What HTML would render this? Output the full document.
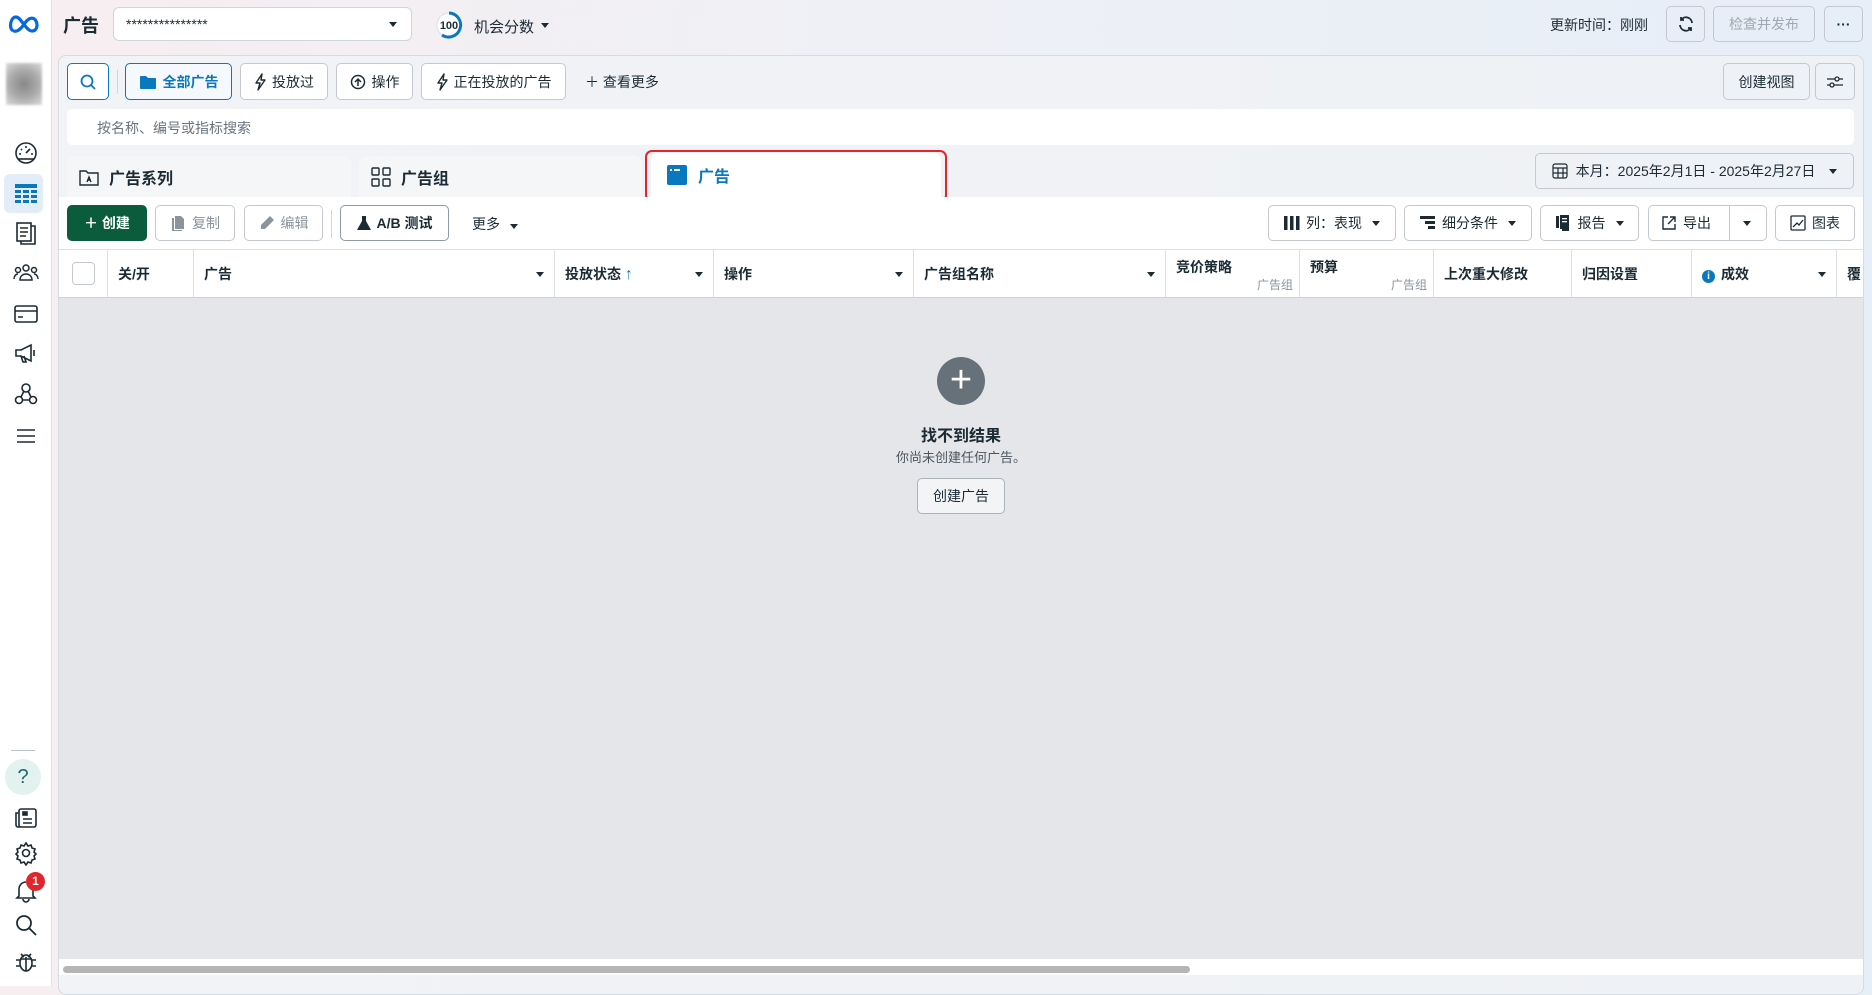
<!DOCTYPE html>
<html><head><meta charset="utf-8"><style>
*{box-sizing:border-box;margin:0;padding:0}
body{width:1872px;height:986px;overflow:hidden;font-family:"Liberation Sans","Noto Sans CJK SC",sans-serif;font-size:14px;color:#1c2b33;background:linear-gradient(90deg,#f7eef0 0%,#eef0f6 50%,#e6eef7 100%);position:relative}
.a{position:absolute}
.side{left:0;top:0;width:52px;height:986px;background:#fff;border-right:1px solid #dde1e6}
.ic{position:absolute;left:13px;width:26px;height:26px}
.btn{position:absolute;border:1px solid #c4c9cf;border-radius:5px;background:#fff;display:flex;align-items:center;justify-content:center;gap:6px;font-size:14px;color:#1c2b33;white-space:nowrap}
.panel{left:58px;top:55px;width:1806px;height:940px;border:1px solid #d5dbe2;border-radius:8px;background:linear-gradient(90deg,#f2f3f6,#eef1f5)}
.th{position:absolute;top:250px;height:47px;border-right:1px solid #dde1e6;font-weight:bold;font-size:14px;padding:14px 10px;white-space:nowrap}
.tri{display:inline-block;width:0;height:0;border-left:4px solid transparent;border-right:4px solid transparent;border-top:5px solid #1c2b33}
.sub{position:absolute;right:6px;bottom:4px;font-weight:normal;font-size:12px;color:#8a949c}
svg{display:block}
</style></head><body>
<div class="a side"></div>
<svg class="a" style="left:8px;top:14px" width="32" height="20" viewBox="0 0 32 20"><path d="M4 16 C1 12 3 3 8 3 C13 3 18 17 24 17 C29 17 30 11 28 7 C26 3 21 3 17 9 C13 15 9 18 6 17" fill="none" stroke="#0668e1" stroke-width="3.2" stroke-linecap="round"/></svg>
<div class="a" style="left:6px;top:63px;width:36px;height:42px;background:radial-gradient(circle,#888 0%,#aaa 50%,#ddd 100%);filter:blur(1px)"></div>
<svg class="ic" style="top:140px" viewBox="0 0 26 26" fill="none" stroke="#1c2b33" stroke-width="1.6"><circle cx="13" cy="13" r="10"/><path d="M13 13l4-4M6 14h2M18 14h2M13 6v2M8 9l1 1"/><path d="M5 19h16"/></svg>
<div class="a" style="left:4px;top:174px;width:39px;height:39px;background:#e3ecf7;border-radius:6px"></div>
<svg class="ic" style="top:180px" viewBox="0 0 26 26" fill="#0a78be"><rect x="2" y="4" width="22" height="4"/><rect x="2" y="10" width="6" height="3"/><rect x="10" y="10" width="6" height="3"/><rect x="18" y="10" width="6" height="3"/><rect x="2" y="15" width="6" height="3"/><rect x="10" y="15" width="6" height="3"/><rect x="18" y="15" width="6" height="3"/><rect x="2" y="20" width="6" height="3"/><rect x="10" y="20" width="6" height="3"/><rect x="18" y="20" width="6" height="3"/></svg>
<svg class="ic" style="top:220px" viewBox="0 0 26 26" fill="none" stroke="#1c2b33" stroke-width="1.6"><rect x="4" y="3" width="14" height="18"/><path d="M18 6h4v18H8v-3M7 8h8M7 12h8M7 16h6"/></svg>
<svg class="ic" style="top:260px" viewBox="0 0 26 26" fill="none" stroke="#1c2b33" stroke-width="1.5"><circle cx="13" cy="8" r="3"/><circle cx="5" cy="10" r="2.5"/><circle cx="21" cy="10" r="2.5"/><path d="M7 20c0-4 3-6 6-6s6 2 6 6zM1 19c0-3 2-5 4-5M25 19c0-3-2-5-4-5"/></svg>
<svg class="ic" style="top:301px" viewBox="0 0 26 26" fill="none" stroke="#1c2b33" stroke-width="1.6"><rect x="2" y="5" width="22" height="16" rx="2"/><path d="M2 10h22M5 16h5"/></svg>
<svg class="ic" style="top:340px" viewBox="0 0 26 26" fill="none" stroke="#1c2b33" stroke-width="1.6"><path d="M3 10h5l10-5v16L8 16H3zM8 16l2 6h3l-2-6M21 10v6"/></svg>
<svg class="ic" style="top:381px" viewBox="0 0 26 26" fill="none" stroke="#1c2b33" stroke-width="1.6"><circle cx="13" cy="7" r="4"/><circle cx="6" cy="19" r="3.5"/><circle cx="20" cy="19" r="3.5"/><path d="M11 10l-3 6M15 10l3 6M9.5 19h7"/></svg>
<svg class="ic" style="top:423px" viewBox="0 0 26 26" fill="none" stroke="#1c2b33" stroke-width="1.6"><path d="M4 7h18M4 13h18M4 19h18"/></svg>
<div class="a" style="left:11px;top:750px;width:24px;height:1px;background:#b7c3cf"></div>
<div class="a" style="left:5px;top:759px;width:36px;height:36px;border-radius:50%;background:#e3f2ee;color:#1b6d73;font-size:20px;text-align:center;line-height:36px">?</div>
<svg class="ic" style="top:805px" viewBox="0 0 26 26" fill="none" stroke="#1c2b33" stroke-width="1.6"><rect x="6" y="4" width="17" height="18" rx="2"/><path d="M6 8H3v12a2 2 0 002 2h2M10 14h9M10 18h9"/><rect x="10" y="7" width="4" height="3" fill="#1c2b33"/></svg>
<svg class="ic" style="top:840px" viewBox="0 0 26 26" fill="none" stroke="#1c2b33" stroke-width="1.6"><circle cx="13" cy="13" r="3.5"/><path d="M13 3l2 3 3-1 1 3 3 1-1 3 2 2-2 2 1 3-3 1-1 3-3-1-2 3-2-3-3 1-1-3-3-1 1-3-2-2 2-2-1-3 3-1 1-3 3 1z"/></svg>
<svg class="ic" style="top:877px" viewBox="0 0 26 26" fill="none" stroke="#1c2b33" stroke-width="1.6"><path d="M6 19V12a7 7 0 0114 0v7l2 2H4zM10 22a3 3 0 006 0"/></svg>
<div class="a" style="left:26px;top:872px;width:19px;height:19px;border-radius:50%;background:#e0262b;color:#fff;font-size:12px;font-weight:bold;text-align:center;line-height:19px">1</div>
<svg class="ic" style="top:912px" viewBox="0 0 26 26" fill="none" stroke="#1c2b33" stroke-width="1.8"><circle cx="11" cy="11" r="7"/><path d="M16 16l7 7"/></svg>
<svg class="ic" style="top:948px" viewBox="0 0 26 26" fill="none" stroke="#1c2b33" stroke-width="1.6"><ellipse cx="13" cy="15" rx="6" ry="8"/><path d="M13 9v14M8 6l3 3M18 6l-3 3M3 12h4M19 12h4M3 18h4M19 18h4M7 11h12"/></svg>

<div class="a" style="left:63px;top:12px;font-size:18px;font-weight:bold">广告</div>
<div class="a" style="left:113px;top:7px;width:299px;height:34px;background:#fff;border:1px solid #d0d5db;border-radius:6px;padding:8px 12px;font-size:14px">***************<span class="tri a" style="right:14px;top:14px"></span></div>
<svg class="a" style="left:434px;top:10px" width="30" height="30" viewBox="0 0 30 30"><circle cx="15" cy="15" r="12" fill="#fff" stroke="#dde"/><path d="M15 3A12 12 0 1 1 8 25" fill="none" stroke="#0a78be" stroke-width="3"/><text x="15" y="19" font-size="11" font-weight="bold" text-anchor="middle" fill="#1c2b33" font-family="Liberation Sans">100</text></svg>
<div class="a" style="left:474px;top:16px;font-size:15px">机会分数</div>
<span class="tri a" style="left:541px;top:23px"></span>
<div class="a" style="left:1550px;top:15px;font-size:14px">更新时间：刚刚</div>
<div class="btn" style="left:1666px;top:6px;width:39px;height:36px;background:transparent"><svg width="18" height="18" viewBox="0 0 18 18" fill="none" stroke="#1c2b33" stroke-width="1.8"><path d="M15 8A6 6 0 0 0 4 5M3 10a6 6 0 0 0 11 3M4 2v3h3M14 16v-3h-3"/></svg></div>
<div class="btn" style="left:1713px;top:6px;width:102px;height:36px;background:transparent;color:#a0a8b0">检查并发布</div>
<div class="btn" style="left:1824px;top:6px;width:39px;height:36px;background:transparent;font-weight:bold">···</div>

<div class="a panel"></div>
<div class="btn" style="left:67px;top:63px;width:42px;height:37px;border-color:#0a78be"><svg width="18" height="18" viewBox="0 0 18 18" fill="none" stroke="#0a78be" stroke-width="1.8"><circle cx="8" cy="8" r="5.5"/><path d="M12 12l4 4"/></svg></div>
<div class="a" style="left:117px;top:70px;width:1px;height:24px;background:#d0d5db"></div>
<div class="btn" style="left:125px;top:63px;width:107px;height:37px;border-color:#0a78be;color:#0a78be;font-weight:bold;background:#f5f9fd"><svg width="18" height="16" viewBox="0 0 18 16"><path d="M1 3a1 1 0 011-1h5l2 2h7a1 1 0 011 1v9a1 1 0 01-1 1H2a1 1 0 01-1-1z" fill="#0a78be"/></svg>全部广告</div>
<div class="btn" style="left:240px;top:63px;width:88px;height:37px"><svg width="12" height="18" viewBox="0 0 12 18" fill="none" stroke="#1c2b33" stroke-width="1.4" stroke-linejoin="round"><path d="M8 1L2 10h4l-2 7 7-10H7z"/></svg>投放过</div>
<div class="btn" style="left:336px;top:63px;width:77px;height:37px"><svg width="16" height="16" viewBox="0 0 16 16" fill="none" stroke="#1c2b33" stroke-width="1.5"><circle cx="8" cy="8" r="6.5"/><path d="M8 12V5M5 8l3-3 3 3"/></svg>操作</div>
<div class="btn" style="left:421px;top:63px;width:145px;height:37px"><svg width="12" height="18" viewBox="0 0 12 18" fill="none" stroke="#1c2b33" stroke-width="1.4" stroke-linejoin="round"><path d="M8 1L2 10h4l-2 7 7-10H7z"/></svg>正在投放的广告</div>
<div class="a" style="left:585px;top:72px;font-size:14px">＋ 查看更多</div>
<div class="btn" style="left:1723px;top:63px;width:87px;height:37px;background:transparent">创建视图</div>
<div class="btn" style="left:1815px;top:63px;width:40px;height:37px;background:transparent"><svg width="18" height="14" viewBox="0 0 18 14" fill="none" stroke="#1c2b33" stroke-width="1.3"><path d="M1 4h8M13 4h4M1 10h3M8 10h9"/><circle cx="11" cy="4" r="2"/><circle cx="6" cy="10" r="2"/></svg></div>
<div class="a" style="left:67px;top:109px;width:1787px;height:36px;background:#fff;border-radius:5px;padding:9px 30px;color:#6a737c;font-size:14px">按名称、编号或指标搜索</div>
<div class="a" style="left:67px;top:156px;width:284px;height:41px;background:#f5f6f8;border-radius:8px 8px 0 0;padding:11px 12px;font-size:16px;font-weight:bold;display:flex;gap:10px;align-items:center"><svg width="20" height="18" viewBox="0 0 20 18" fill="none" stroke="#1c2b33" stroke-width="1.4"><path d="M1 3h6l2 2h10v12H1z"/><path d="M8 14l2-5 2 5M9 12h2"/></svg>广告系列</div>
<div class="a" style="left:359px;top:156px;width:283px;height:41px;background:#f5f6f8;border-radius:8px 8px 0 0;padding:11px 12px;font-size:16px;font-weight:bold;display:flex;gap:10px;align-items:center"><svg width="20" height="20" viewBox="0 0 20 20" fill="none" stroke="#1c2b33" stroke-width="1.4"><rect x="1" y="1" width="7" height="7" rx="1"/><rect x="12" y="1" width="7" height="7" rx="1"/><rect x="1" y="12" width="7" height="7" rx="1"/><rect x="12" y="12" width="7" height="7" rx="1"/></svg>广告组</div>
<div class="a" style="left:651px;top:153px;width:290px;height:46px;background:#fff;border-radius:8px 8px 0 0"></div>
<div class="a" style="left:645px;top:150px;width:302px;height:52px;border:2px solid #e0262b;border-radius:7px"></div>
<div class="a" style="left:666px;top:163px;font-size:16px;font-weight:bold;color:#0a78be;display:flex;gap:10px;align-items:center"><svg width="22" height="22" viewBox="0 0 22 22"><rect x="1" y="1" width="20" height="20" rx="2" fill="#0a78be"/><rect x="4" y="5" width="2" height="2" fill="#fff"/><rect x="8" y="5" width="6" height="2" fill="#fff"/></svg>广告</div>
<div class="btn" style="left:1535px;top:153px;width:319px;height:36px;background:transparent;gap:8px"><svg width="16" height="16" viewBox="0 0 16 16" fill="none" stroke="#1c2b33" stroke-width="1.2"><rect x="1" y="1" width="14" height="14" rx="2"/><path d="M1 5h14M1 10h14M6 5v10M11 5v10"/></svg>本月：2025年2月1日 - 2025年2月27日 <span class="tri" style="margin-left:6px"></span></div>
<div class="a" style="left:59px;top:197px;width:1804px;height:53px;background:#fff"></div>
<div class="btn" style="left:67px;top:205px;width:80px;height:36px;background:#0b5c3c;border-color:#0b5c3c;color:#fff;font-weight:bold">＋ 创建</div>
<div class="btn" style="left:155px;top:205px;width:80px;height:36px;color:#8a949c"><svg width="16" height="16" viewBox="0 0 16 16" fill="#8a949c"><path d="M5 1h6l3 3v10H5z"/><path d="M2 3h2v12h8v1H2z"/></svg>复制</div>
<div class="btn" style="left:244px;top:205px;width:79px;height:36px;color:#8a949c"><svg width="16" height="16" viewBox="0 0 16 16" fill="#8a949c"><path d="M11 1l4 4-9 9H2v-4z"/></svg>编辑</div>
<div class="a" style="left:331px;top:210px;width:1px;height:28px;background:#d0d5db"></div>
<div class="btn" style="left:340px;top:205px;width:109px;height:36px;border-color:#8f9aa3;font-weight:bold"><svg width="14" height="16" viewBox="0 0 14 16"><path d="M5 1h4v5l5 9H0l5-9z" fill="#1c2b33"/></svg>A/B 测试</div>
<div class="a" style="left:472px;top:214px;font-size:14px">更多 <span class="tri" style="margin-left:6px"></span></div>
<div class="btn" style="left:1268px;top:205px;width:128px;height:36px"><svg width="16" height="14" viewBox="0 0 16 14" fill="#1c2b33"><rect x="0" y="0" width="3.5" height="14"/><rect x="6" y="0" width="3.5" height="14"/><rect x="12" y="0" width="3.5" height="14"/></svg>列：表现 <span class="tri" style="margin-left:4px"></span></div>
<div class="btn" style="left:1404px;top:205px;width:128px;height:36px"><svg width="16" height="14" viewBox="0 0 16 14" fill="#1c2b33"><rect x="0" y="0" width="15" height="3"/><rect x="5" y="5" width="10" height="3"/><rect x="8" y="10" width="7" height="3"/></svg>细分条件 <span class="tri" style="margin-left:4px"></span></div>
<div class="btn" style="left:1540px;top:205px;width:99px;height:36px"><svg width="16" height="16" viewBox="0 0 16 16" fill="#1c2b33"><rect x="0" y="1" width="3" height="12"/><path d="M4 0h9v16H6v-2H4z"/><rect x="6" y="3" width="5" height="1.3" fill="#fff"/><rect x="6" y="6" width="5" height="1.3" fill="#fff"/></svg>报告 <span class="tri" style="margin-left:4px"></span></div>
<div class="btn" style="left:1648px;top:205px;width:119px;height:36px;justify-content:flex-start;padding-left:12px"><svg width="16" height="16" viewBox="0 0 16 16" fill="none" stroke="#1c2b33" stroke-width="1.4"><path d="M7 2H2v12h12V9M9 2h5v5M14 2L7 9"/></svg>导出<span class="a" style="left:80px;top:0;height:34px;width:1px;background:#c4c9cf"></span><span class="tri a" style="left:94px;top:15px"></span></div>
<div class="btn" style="left:1775px;top:205px;width:80px;height:36px"><svg width="16" height="16" viewBox="0 0 16 16" fill="none" stroke="#1c2b33" stroke-width="1.3"><rect x="1" y="1" width="14" height="14" rx="1"/><path d="M3 12l4-4 2 2 4-5"/></svg>图表</div>
<div class="a" style="left:59px;top:249px;width:1804px;height:49px;background:#fff;border-top:1px solid #dde1e6;border-bottom:1px solid #ccd2d8"></div>
<div class="a" style="left:72px;top:262px;width:23px;height:23px;border:1px solid #c4c9cf;border-radius:4px;background:#fff"></div>
<div class="a" style="left:107px;top:250px;width:1px;height:47px;background:#dde1e6"></div>
<div class="th" style="left:108px;width:86px">关/开</div>
<div class="th" style="left:194px;width:361px">广告<span class="tri a" style="right:10px;top:22px"></span></div>
<div class="th" style="left:555px;width:159px">投放状态 <span style="color:#0a78be;font-size:16px">↑</span><span class="tri a" style="right:10px;top:22px"></span></div>
<div class="th" style="left:714px;width:200px">操作<span class="tri a" style="right:10px;top:22px"></span></div>
<div class="th" style="left:914px;width:252px">广告组名称<span class="tri a" style="right:10px;top:22px"></span></div>
<div class="th" style="left:1166px;width:134px;padding-top:7px">竞价策略<span class="sub">广告组</span></div>
<div class="th" style="left:1300px;width:134px;padding-top:7px">预算<span class="sub">广告组</span></div>
<div class="th" style="left:1434px;width:138px">上次重大修改</div>
<div class="th" style="left:1572px;width:120px">归因设置</div>
<div class="th" style="left:1692px;width:145px"><span style="display:inline-block;width:13px;height:13px;border-radius:50%;background:#0a78be;color:#fff;font-size:10px;text-align:center;line-height:13px;margin-right:6px">i</span>成效<span class="tri a" style="right:10px;top:22px"></span></div>
<div class="th" style="left:1837px;width:26px;border:none;overflow:hidden">覆</div>
<div class="a" style="left:59px;top:298px;width:1804px;height:661px;background:#e4e6e9"></div>
<div class="a" style="left:937px;top:357px;width:48px;height:48px;border-radius:50%;background:#67717a;color:#fff;font-size:38px;line-height:46px;text-align:center">+</div>
<div class="a" style="left:861px;top:422px;width:200px;text-align:center;font-weight:bold;font-size:16px">找不到结果</div>
<div class="a" style="left:861px;top:447px;width:200px;text-align:center;font-size:13px;color:#4b555d">你尚未创建任何广告。</div>
<div class="btn" style="left:917px;top:478px;width:88px;height:36px;background:#f3f4f6;border-color:#aab2ba">创建广告</div>
<div class="a" style="left:59px;top:959px;width:1804px;height:16px;background:#fff"></div>
<div class="a" style="left:63px;top:966px;width:1127px;height:7px;border-radius:4px;background:#b5b5b5"></div>
</body></html>
